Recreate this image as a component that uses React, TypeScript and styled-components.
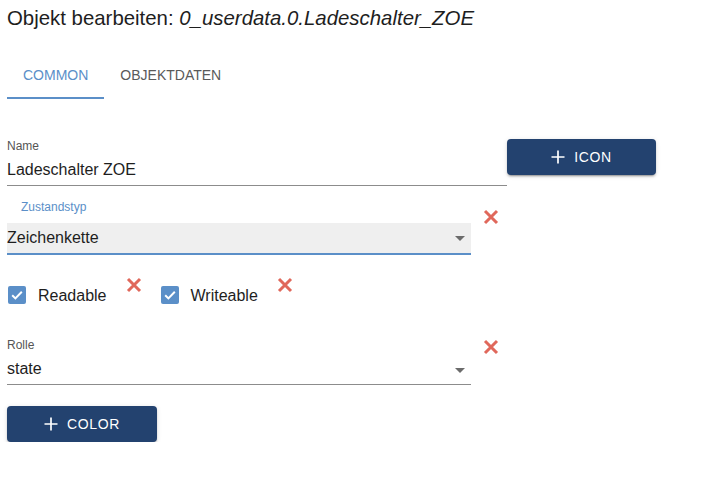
import React from "react";
import styled, {createGlobalStyle} from "styled-components";

const BLUE = "#5b8fc8";
const NAVY = "#23426f";
const RED = "#e0685b";
const LINE = "#8c8c8c";

const GlobalStyle = createGlobalStyle`
  body {
    margin: 0;
    background: #ffffff;
    font-family: "Liberation Sans", Arial, sans-serif;
    color: #222222;
  }
`;

const Page = styled.div`
  padding: 0 7px;
`;

const Title = styled.div`
  margin-top: 6px;
  font-size: 20.4px;
  line-height: 24px;
  height: 24px;
  color: #1e1e1e;
  white-space: nowrap;
`;

const ObjectId = styled.span`
  font-style: italic;
`;

const Tabs = styled.div`
  display: flex;
  margin-top: 21px;
  height: 48px;
`;

const Tab = styled.div<{ $active?: boolean }>`
  box-sizing: border-box;
  height: 48px;
  padding: 2px 16px 0;
  min-width: 97px;
  display: flex;
  align-items: center;
  justify-content: center;
  font-size: 14px;
  text-transform: uppercase;
  color: ${(p) => (p.$active ? BLUE : "#5a5a5a")};
  border-bottom: 2px solid ${(p) => (p.$active ? BLUE : "transparent")};
`;

const Form = styled.div`
  margin-top: 39px;
  display: flex;
  flex-direction: column;
`;

const Row = styled.div<{ $top?: number }>`
  display: flex;
  align-items: flex-start;
  margin-top: ${(p) => p.$top ?? 0}px;
`;

const Field = styled.div<{ $width: number; $top?: number }>`
  width: ${(p) => p.$width}px;
  margin-top: ${(p) => p.$top ?? 0}px;
  display: flex;
  flex-direction: column;
`;

const Label = styled.div<{ $focused?: boolean }>`
  font-size: 12px;
  line-height: 14px;
  color: ${(p) => (p.$focused ? BLUE : "#555555")};
  padding-left: ${(p) => (p.$focused ? 14 : 0)}px;
`;

const Input = styled.div`
  position: relative;
  margin-top: 7px;
  font-size: 16px;
  line-height: 20px;
  padding-bottom: 5px;
  border-bottom: 1px solid ${LINE};
  color: #1e1e1e;
`;

const FilledSelect = styled.div`
  position: relative;
  margin-top: 9px;
  height: 30px;
  line-height: 30px;
  font-size: 16px;
  background: #efefef;
  border-bottom: 2px solid ${BLUE};
  color: #1e1e1e;
`;

const Arrow = styled.span<{ $y: number }>`
  position: absolute;
  right: 6px;
  top: ${(p) => p.$y}px;
  width: 0;
  height: 0;
  border-left: 5px solid transparent;
  border-right: 5px solid transparent;
  border-top: 5px solid #6b6b6b;
`;

const Button = styled.button<{ $width: number; $top?: number }>`
  box-sizing: border-box;
  width: ${(p) => p.$width}px;
  height: 36px;
  margin-top: ${(p) => p.$top ?? 0}px;
  border: none;
  border-radius: 4px;
  background: ${NAVY};
  color: #ffffff;
  font-family: "Liberation Sans", Arial, sans-serif;
  font-size: 14px;
  letter-spacing: 0.6px;
  text-transform: uppercase;
  display: flex;
  align-items: center;
  justify-content: center;
  padding: 0;
  box-shadow: 0 3px 1px -2px rgba(0, 0, 0, 0.2), 0 2px 2px 0 rgba(0, 0, 0, 0.14),
    0 1px 5px 0 rgba(0, 0, 0, 0.12);
  svg {
    margin-right: 9px;
  }
`;

const ClearIcon = styled.svg<{ $left: number; $top?: number }>`
  flex: none;
  margin-left: ${(p) => p.$left}px;
  margin-top: ${(p) => p.$top ?? 0}px;
`;

const CheckItem = styled.label<{ $left?: number }>`
  display: flex;
  align-items: center;
  height: 18px;
  margin-top: 9px;
  margin-left: ${(p) => p.$left ?? 0}px;
  font-size: 16px;
  line-height: 18px;
  color: #1e1e1e;
`;

const CheckText = styled.span`
  position: relative;
  top: 1px;
`;

const CheckBox = styled.span`
  width: 18px;
  height: 18px;
  margin-left: 1px;
  margin-right: 12px;
  border-radius: 2px;
  background: ${BLUE};
  display: flex;
  align-items: center;
  justify-content: center;
`;

function Plus() {
  return (
    <svg width="14" height="14" viewBox="0 0 14 14">
      <path d="M7 0.5V13.5M0.5 7H13.5" stroke="#ffffff" strokeWidth="1.7" />
    </svg>
  );
}

function Clear({left, top}: { left: number; top?: number }) {
  return (
    <ClearIcon $left={left} $top={top} width="16" height="16" viewBox="0 0 16 16">
      <path d="M2 2L14 14M14 2L2 14" stroke={RED} strokeWidth="3" />
    </ClearIcon>
  );
}

function Check({label, left}: { label: string; left?: number }) {
  return (
    <CheckItem $left={left}>
      <CheckBox>
        <svg width="14" height="14" viewBox="0 0 14 14">
          <path d="M2.2 7.2l3.2 3.2 6.4-6.6" stroke="#ffffff" strokeWidth="2" fill="none" />
        </svg>
      </CheckBox>
      <CheckText>{label}</CheckText>
    </CheckItem>
  );
}

export default function App() {
  return (
    <Page>
      <GlobalStyle />
      <Title>
        Objekt bearbeiten: <ObjectId>0_userdata.0.Ladeschalter_ZOE</ObjectId>
      </Title>

      <Tabs>
        <Tab $active>Common</Tab>
        <Tab>Objektdaten</Tab>
      </Tabs>

      <Form>
        <Row>
          <Field $width={500} $top={1}>
            <Label>Name</Label>
            <Input>Ladeschalter ZOE</Input>
          </Field>
          <Button $width={149} $top={1}>
            <Plus />
            Icon
          </Button>
        </Row>

        <Row>
          <Field $width={464} $top={14}>
            <Label $focused>Zustandstyp</Label>
            <FilledSelect>
              Zeichenkette
              <Arrow $y={13} />
            </FilledSelect>
          </Field>
          <Clear left={12} top={23} />
        </Row>

        <Row $top={22}>
          <Check label="Readable" />
          <Clear left={19} />
          <Check label="Writeable" left={18} />
          <Clear left={19} />
        </Row>

        <Row $top={34}>
          <Field $width={464}>
            <Label>Rolle</Label>
            <Input>
              state
              <Arrow $y={9} />
            </Input>
          </Field>
          <Clear left={12} top={1} />
        </Row>

        <Row $top={21}>
          <Button $width={150}>
            <Plus />
            Color
          </Button>
        </Row>
      </Form>
    </Page>
  );
}
